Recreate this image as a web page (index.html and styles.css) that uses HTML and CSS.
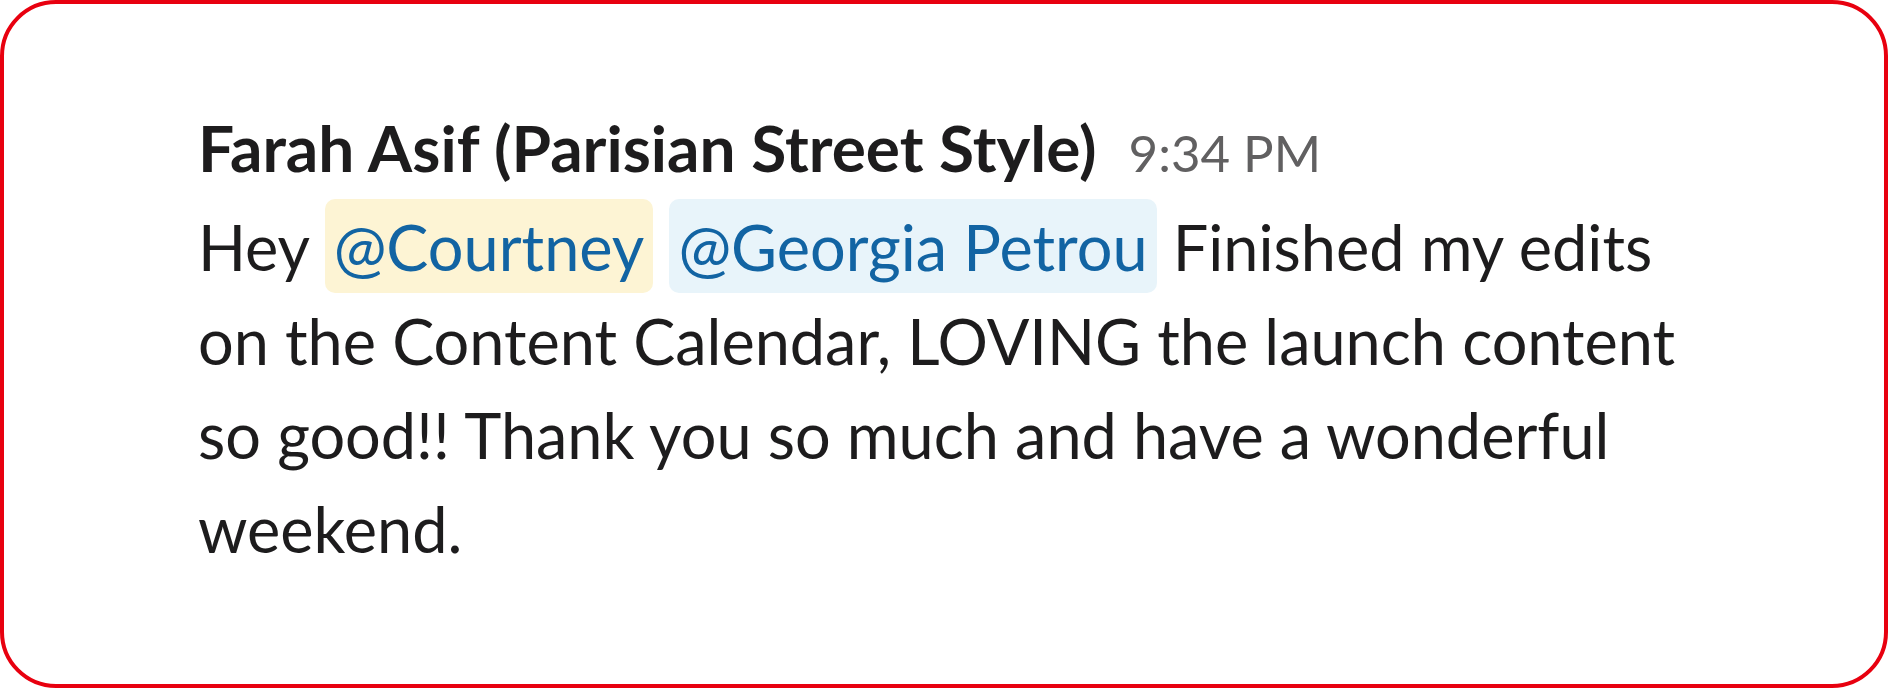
FILE: index.html
```html
<!DOCTYPE html>
<html lang="en">
<head>
<meta charset="utf-8">
<title>Message</title>
<link rel="stylesheet" href="styles.css">
</head>
<body>
  <div class="card">
    <div class="message">
      <div class="header">
        <span class="sender">Farah Asif (Parisian Street Style)</span><span class="time">9:34 PM</span>
      </div>
      <div class="body">Hey <span class="mention self">@Courtney</span> <span class="mention">@Georgia Petrou</span> Finished my edits on the Content Calendar, LOVING the launch content so good!! Thank you so much and have a wonderful weekend.</div>
    </div>
  </div>
</body>
</html>
```

FILE: styles.css
```css
html, body {
  margin: 0;
  padding: 0;
  background: #ffffff;
}

body {
  font-family: Lato, "Noto Sans", sans-serif;
  color: #1d1c1d;
}

.card {
  box-sizing: border-box;
  width: 1888px;
  height: 688px;
  border: 4px solid #e8000f;
  border-radius: 56px;
  padding: 97px 0 0 194px;
}

.message {
  width: 1490px;
  font-size: 64px;
  line-height: 94px;
}

.header {
  white-space: nowrap;
}

.sender {
  font-weight: 700;
  color: #1d1c1d;
}

.time {
  font-size: 51px;
  color: #616061;
  margin-left: 32px;
}

.body {
  font-size: 63px;
  font-weight: 400;
}

.mention {
  color: #1264a3;
  background: #e8f4fa;
  border-radius: 10px;
  padding: 10px 9px 9px;
}

.mention.self {
  background: #fdf4d4;
}
```
